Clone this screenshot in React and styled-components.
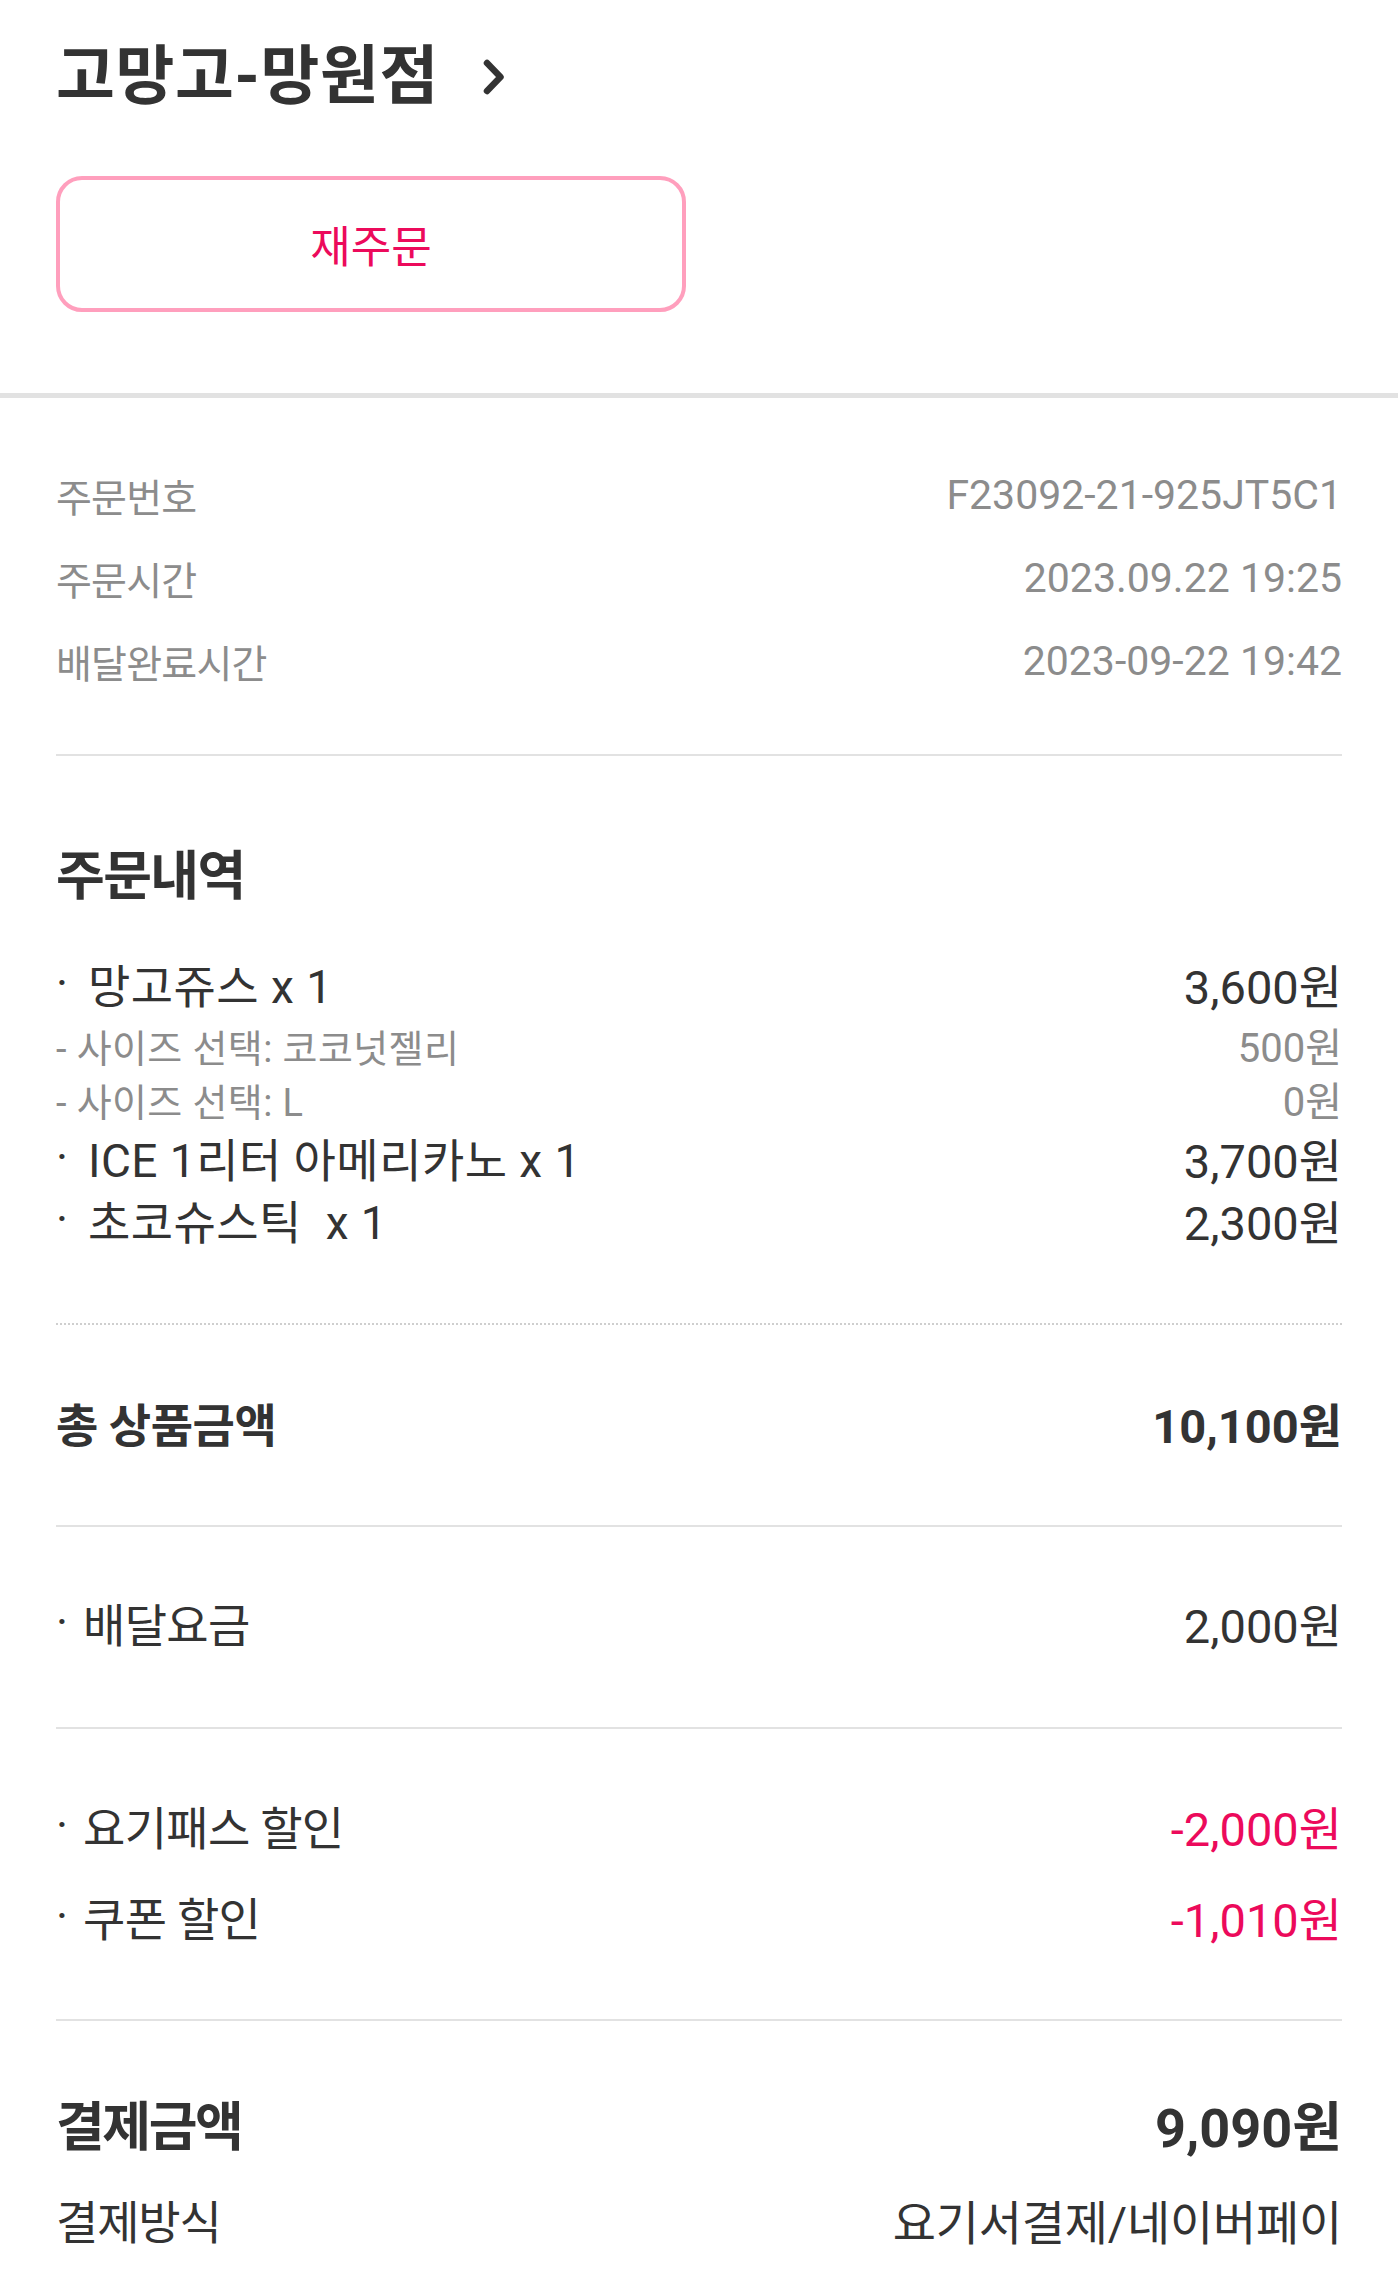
import React from 'react';
import styled, { createGlobalStyle } from 'styled-components';

// --- Global ---

const GlobalStyle = createGlobalStyle`
  html, body {
    margin: 0;
    padding: 0;
    background: #ffffff;
  }
  body {
    font-family: 'Roboto', 'Noto Sans CJK KR', sans-serif;
    color: #333333;
    -webkit-font-smoothing: antialiased;
  }
  * { box-sizing: border-box; }
`;

const colors = {
  text: '#333333',
  gray: '#8c8c8c',
  pink: '#ec0a5b',
  pinkBorder: '#ff9fbd',
  line: '#e2e2e2',
};

// --- Layout ---

const Page = styled.div`
  width: 1398px;
  min-height: 2295px;
  background: #fff;
`;

const Header = styled.header`
  padding: 40px 56px 81px;
  display: flex;
  flex-direction: column;
  align-items: flex-start;
`;

const StoreLink = styled.div`
  display: flex;
  align-items: center;
  gap: 44px;
  height: 74px;
`;

const StoreName = styled.h1`
  margin: 0;
  font-size: 64px;
  font-weight: 700;
  letter-spacing: 0.01em;
  line-height: 74px;
  color: ${colors.text};
`;

const ReorderButton = styled.button`
  margin-top: 62px;
  width: 630px;
  height: 136px;
  border: 4px solid ${colors.pinkBorder};
  border-radius: 26px;
  background: #fff;
  color: ${colors.pink};
  font-family: 'Roboto', 'Noto Sans CJK KR', sans-serif;
  font-size: 44px;
  letter-spacing: 0;
  cursor: pointer;
`;

const ThickDivider = styled.div`
  height: 5px;
  background: ${colors.line};
`;

const Section = styled.section`
  margin: 0 56px;
  padding: ${(p) => p.$pad || '0'};
  border-bottom: ${(p) =>
    p.$border === 'dotted'
      ? `2px dotted #cfcfcf`
      : p.$border
      ? `2px solid ${colors.line}`
      : 'none'};
  display: flex;
  flex-direction: column;
  gap: ${(p) => p.$gap || '0'};
`;

const Row = styled.div`
  display: flex;
  justify-content: space-between;
  align-items: center;
  height: ${(p) => p.$h || 70}px;
`;

const Label = styled.span`
  display: flex;
  align-items: center;
  font-size: ${(p) => p.$size || 46}px;
  font-weight: ${(p) => (p.$bold ? 700 : 400)};
  color: ${(p) => p.$color || colors.text};
  letter-spacing: ${(p) => p.$ls ?? '-0.015em'};
  white-space: pre;
`;

const Value = styled.span`
  font-size: ${(p) => p.$size || 47}px;
  font-weight: ${(p) => (p.$bold ? 700 : 400)};
  color: ${(p) => p.$color || colors.text};
  letter-spacing: ${(p) => p.$ls ?? '0'};
  white-space: pre;
`;

const Bullet = styled.span`
  display: inline-block;
  width: ${(p) => p.$w || 32}px;
  letter-spacing: 0;
`;

const SectionTitle = styled.h2`
  margin: 0;
  font-size: 53px;
  font-weight: 700;
  letter-spacing: -0.03em;
  line-height: 70px;
  color: ${colors.text};
`;

const ItemList = styled.div`
  margin-top: 40px;
  display: flex;
  flex-direction: column;
`;

const OptionList = styled.div`
  margin-top: 4px;
  display: flex;
  flex-direction: column;
`;

const Chevron = () => (
  <svg width="22" height="38" viewBox="0 0 22 38" fill="none">
    <path
      d="M4 5 L17.5 19 L4 33"
      stroke="#333333"
      strokeWidth="6.5"
      strokeLinecap="round"
      strokeLinejoin="round"
    />
  </svg>
);

const info = [
  ['주문번호', 'F23092-21-925JT5C1'],
  ['주문시간', '2023.09.22 19:25'],
  ['배달완료시간', '2023-09-22 19:42'],
];

const items = [
  {
    name: '망고쥬스 x 1',
    price: '3,600원',
    options: [
      ['- 사이즈 선택: 코코넛젤리', '500원'],
      ['- 사이즈 선택: L', '0원'],
    ],
  },
  { name: 'ICE 1리터 아메리카노 x 1', price: '3,700원', options: [] },
  { name: '초코슈스틱  x 1', price: '2,300원', options: [] },
];

export default function App() {
  return (
    <>
      <GlobalStyle />
      <Page>
        <Header>
          <StoreLink>
            <StoreName>고망고-망원점</StoreName>
            <Chevron />
          </StoreLink>
          <ReorderButton>재주문</ReorderButton>
        </Header>

        <ThickDivider />

        <Section $pad="55px 0 52px" $border>
          {info.map(([k, v]) => (
            <Row key={k} $h={83}>
              <Label $size={39} $color={colors.gray} $ls="-0.02em">{k}</Label>
              <Value $size={41} $color={colors.gray}>{v}</Value>
            </Row>
          ))}
        </Section>

        <Section $pad="86px 0 73px" $border="dotted">
          <SectionTitle>주문내역</SectionTitle>
          <ItemList>
            {items.map((it) => (
              <div key={it.name}>
                <Row $h={62}>
                  <Label $ls="0.01em">
                    <Bullet>·</Bullet>
                    {it.name}
                  </Label>
                  <Value>{it.price}</Value>
                </Row>
                {it.options.length > 0 && (
                  <OptionList>
                    {it.options.map(([opt, price]) => (
                      <Row key={opt} $h={54}>
                        <Label $size={38} $color={colors.gray} $ls="0.01em">
                          {opt}
                        </Label>
                        <Value $size={40} $color={colors.gray}>{price}</Value>
                      </Row>
                    ))}
                  </OptionList>
                )}
              </div>
            ))}
          </ItemList>
        </Section>

        <Section $pad="62px 0 68px" $border>
          <Row>
            <Label $bold $ls="-0.01em">총 상품금액</Label>
            <Value $bold $size={47}>10,100원</Value>
          </Row>
        </Section>

        <Section $pad="60px 0 70px" $border>
          <Row>
            <Label>
              <Bullet $w={27}>·</Bullet>
              배달요금
            </Label>
            <Value>2,000원</Value>
          </Row>
        </Section>

        <Section $pad="61px 0 68px" $gap="21px" $border>
          <Row>
            <Label>
              <Bullet $w={27}>·</Bullet>
              요기패스 할인
            </Label>
            <Value $color={colors.pink}>-2,000원</Value>
          </Row>
          <Row>
            <Label>
              <Bullet $w={27}>·</Bullet>
              쿠폰 할인
            </Label>
            <Value $color={colors.pink}>-1,010원</Value>
          </Row>
        </Section>

        <Section $pad="67px 0 0" $gap="26px">
          <Row>
            <Label $bold $size={53} $ls="-0.045em">결제금액</Label>
            <Value $bold $size={54}>9,090원</Value>
          </Row>
          <Row>
            <Label $ls="-0.025em">결제방식</Label>
            <Value $ls="-0.005em">요기서결제/네이버페이</Value>
          </Row>
        </Section>
      </Page>
    </>
  );
}
